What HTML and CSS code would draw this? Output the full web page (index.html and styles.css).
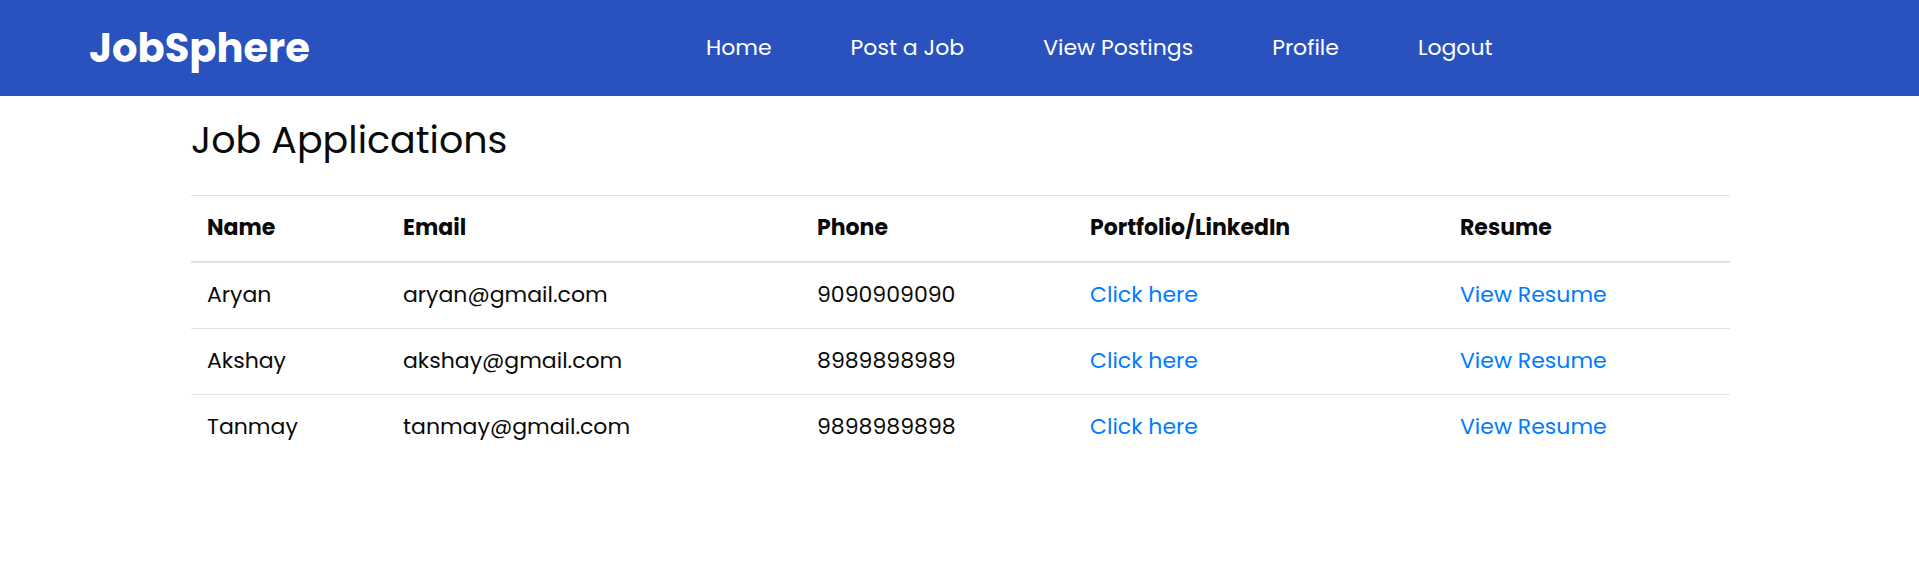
FILE: index.html
```
<!DOCTYPE html>
<html lang="en">
<head>
<meta charset="utf-8">
<meta name="viewport" content="width=device-width, initial-scale=1">
<title>JobSphere</title>
<link rel="stylesheet" href="styles.css">
</head>
<body>
<header class="navbar">
  <a class="logo" href="#">JobSphere</a>
  <nav>
    <ul class="nav-links">
      <li><a href="#">Home</a></li>
      <li><a href="#">Post a Job</a></li>
      <li><a href="#">View Postings</a></li>
      <li><a href="#">Profile</a></li>
      <li><a href="#">Logout</a></li>
    </ul>
  </nav>
</header>
<main class="applications">
  <h1 class="title">Job Applications</h1>
  <table class="table">
    <colgroup>
      <col class="col-name"><col class="col-email"><col class="col-phone"><col class="col-portfolio"><col>
    </colgroup>
    <thead>
      <tr><th scope="col">Name</th><th scope="col">Email</th><th scope="col">Phone</th><th scope="col">Portfolio/LinkedIn</th><th scope="col">Resume</th></tr>
    </thead>
    <tbody>
      <tr><td>Aryan</td><td>aryan@gmail.com</td><td>9090909090</td><td><a href="#">Click here</a></td><td><a href="#">View Resume</a></td></tr>
      <tr><td>Akshay</td><td>akshay@gmail.com</td><td>8989898989</td><td><a href="#">Click here</a></td><td><a href="#">View Resume</a></td></tr>
      <tr><td>Tanmay</td><td>tanmay@gmail.com</td><td>9898989898</td><td><a href="#">Click here</a></td><td><a href="#">View Resume</a></td></tr>
    </tbody>
  </table>
</main>
</body>
</html>
```
FILE: styles.css
```
* {
  box-sizing: border-box;
}

body {
  margin: 0;
  background: #fff;
  color: #0a0a0a;
  font-family: Poppins, Inter, sans-serif;
  font-size: 22px;
  line-height: 32px;
}

a {
  color: #007bff;
  text-decoration: none;
}

.navbar {
  display: grid;
  grid-template-columns: 617px 1fr;
  align-items: center;
  min-height: 96px;
  padding: 0 89px;
  background: #2952bf;
}

.navbar a {
  color: #fff;
}

.navbar .logo {
  font-size: 40px;
  font-weight: 700;
  line-height: 60px;
}

.nav-links {
  display: flex;
  gap: 79px;
  margin: 0;
  padding: 0;
  list-style: none;
  white-space: nowrap;
}

.applications {
  padding: 15px 189px 0 191px;
}

.title {
  margin: 0 0 27px;
  font-size: 38px;
  font-weight: 400;
  line-height: 57px;
}

.table {
  width: 100%;
  border-collapse: collapse;
  table-layout: fixed;
}

.col-name {
  width: 196px;
}

.col-email {
  width: 414px;
}

.col-phone {
  width: 273px;
}

.col-portfolio {
  width: 370px;
}

.table th,
.table td {
  padding: 16px 16px 17px;
  border-top: 1px solid #dee2e6;
  text-align: left;
}

.table th {
  border-bottom: 2px solid #dee2e6;
  font-weight: 700;
}
```
